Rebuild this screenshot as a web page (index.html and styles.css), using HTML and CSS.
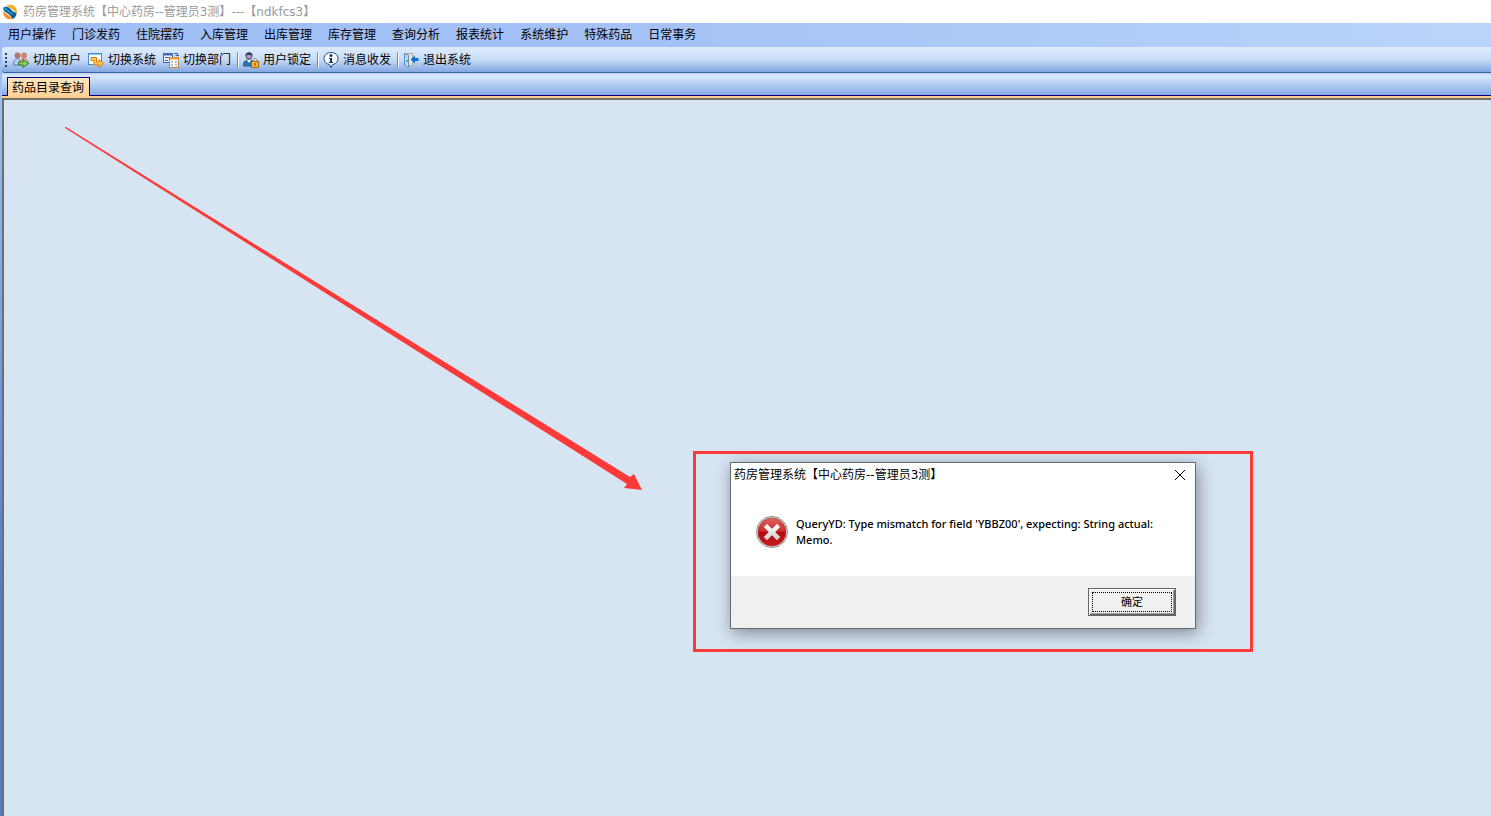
FILE: index.html
```html
<!DOCTYPE html>
<html lang="zh-CN">
<head>
    <meta charset="UTF-8">
    <meta name="viewport" content="width=device-width, initial-scale=1.0">
    <title>药房管理系统</title>
    <link rel="stylesheet" href="styles.css">
</head>
<body>
    <header class="titlebar">
        <svg class="icon" viewBox="0 0 16 16">
            <path d="M4 2C9 -1 15 2 15 8L14 10C13 6 9 4 4 2Z" fill="#f8ab20"/>
            <path d="M2 3C5 2 8 4 10 6.500C12 9 15 8 14.500 10C14 13 12 14.500 10.500 15C9 12 7 10 5 9C2 7.500 0.500 6 2 3Z" fill="#125b91"/>
            <path d="M2 3C5 4 6 6 9 8L13 11C10 11 8 10 6 8C4 6 2 6 1 5Z" fill="#2590c9"/>
            <path d="M1 7C3 10 7 10 10 15C5 16 1 13 1 7Z" fill="#f29424"/>
        </svg>
        <span>药房管理系统【中心药房--管理员3测】---【ndkfcs3】</span>
    </header>

    <nav class="menubar">
        <button class="menu-item">用户操作</button>
        <button class="menu-item">门诊发药</button>
        <button class="menu-item">住院摆药</button>
        <button class="menu-item">入库管理</button>
        <button class="menu-item">出库管理</button>
        <button class="menu-item">库存管理</button>
        <button class="menu-item">查询分析</button>
        <button class="menu-item">报表统计</button>
        <button class="menu-item">系统维护</button>
        <button class="menu-item">特殊药品</button>
        <button class="menu-item">日常事务</button>
    </nav>

    <div class="toolbar">
        <span class="grip"></span>
        <div class="tool-group">
            <button class="tool">
                <svg class="icon" viewBox="0 0 16 16">
                    <path d="M0.500 13C0.500 8 3 6.500 4.500 6.500S8 9 8 13Z" fill="#b9d4f3" stroke="#4b78bd"/>
                    <circle cx="4.500" cy="3.500" r="3" fill="#b87564"/>
                    <path d="M7 12C7 8 9 6.500 11 6.500S15 8 15 12Z" fill="#f0c4b8" stroke="#d0604a"/>
                    <circle cx="11" cy="3.500" r="3" fill="#d28472"/>
                    <path d="M5.500 10H10V7.500L15.500 11.500L10 15.500V13H5.500Z" fill="#8ed45c" stroke="#267724"/>
                </svg>
                <span>切换用户</span>
            </button>
            <button class="tool">
                <svg class="icon" viewBox="0 0 16 16">
                    <rect x="0.500" y="1.500" width="13" height="11" fill="#fff" stroke="#3c91d8"/>
                    <path d="M1 2.500H13" stroke="#83c7f2"/>
                    <path d="M3 5.500H8.500V10H11V7.500L15.500 11.500L11 15.500V13H6V8.500H3Z" fill="#ffc94a" stroke="#d07818"/>
                </svg>
                <span>切换系统</span>
            </button>
            <button class="tool">
                <svg class="icon" viewBox="0 0 16 16">
                    <rect x="0.500" y="1.500" width="9" height="9" fill="#e8f0ff" stroke="#4468b5"/>
                    <path d="M1 2.500H9" stroke="#4468b5" stroke-width="2"/>
                    <path d="M2 5.500H6M2 8.500H5" stroke="#4468b5"/>
                    <path d="M11 1.500H14.500V4M12.500 3.500H16" fill="none" stroke="#2f62ba"/>
                    <rect x="6.500" y="5.500" width="9" height="10" fill="#fff" stroke="#c88432"/>
                    <path d="M7 6.500H15" stroke="#f0a43c" stroke-width="2"/>
                    <path d="M8 10H10M12 10H14M8 13H10M12 13H14" stroke="#a9bfdc" stroke-width="2"/>
                </svg>
                <span>切换部门</span>
            </button>
        </div>
        <div class="tool-group">
            <button class="tool">
                <svg class="icon" viewBox="0 0 16 16">
                    <path d="M0.500 14C0 10 2 8 6 8S11 10 11 14Z" fill="#287ba5" stroke="#1b5a89"/>
                    <path d="M4 8L6 11L8 8Z" fill="#fff"/>
                    <circle cx="6" cy="4" r="3" fill="#b79bb0" stroke="#51457e"/>
                    <path d="M2.500 4C2 -1 10 -1 9.500 4L8 3H4Z" fill="#39366f"/>
                    <path d="M10 10V8C10 6 14 6 14 8V10" fill="none" stroke="#a6865b"/>
                    <rect x="8.500" y="9.500" width="7" height="6" fill="#f9b83d" stroke="#a96617"/>
                    <path d="M12 11V14" stroke="#704215"/>
                </svg>
                <span>用户锁定</span>
            </button>
        </div>
        <div class="tool-group">
            <button class="tool">
                <svg class="icon" viewBox="0 0 16 16">
                    <path d="M8 0.500C12 0.500 15 3 15 6.500C15 9.500 13 12 9.500 12.500L8 15.500L6.500 12.500C3 12 1 9.500 1 6.500C1 3 4 0.500 8 0.500Z" fill="#fff" stroke="#244885"/>
                    <circle cx="8" cy="3.500" r="1.500" fill="#12366f"/>
                    <path d="M6 6H9V10H10V11H6V10H7V7H6Z" fill="#12366f"/>
                </svg>
                <span>消息收发</span>
            </button>
        </div>
        <div class="tool-group">
            <button class="tool">
                <svg class="icon" viewBox="0 0 16 16">
                    <path d="M1.500 1.500H9.500V13.500H1.500Z" fill="#f4e6cb" stroke="#a9a49c"/>
                    <path d="M1.500 1.500L5.500 3V15.500L1.500 13Z" fill="#b9daf5" stroke="#5f8fc0"/>
                    <path d="M4 8V10" stroke="#275790"/>
                    <path d="M15.500 6V9H12V11.500L7.500 7.500L12 3.500V6Z" fill="#1670cc"/>
                </svg>
                <span>退出系统</span>
            </button>
        </div>
    </div>

    <div class="tabs">
        <button class="tab">药品目录查询</button>
    </div>

    <main class="workspace">
        <svg class="arrow" viewBox="0 0 578 364">
            <path d="M0 0L1 0L565 350L569 347L577 363L559 361L562 357L0 1Z" fill="#fc3a39"/>
        </svg>

        <div class="highlight"></div>

        <section class="dialog" role="alertdialog" aria-labelledby="dialogTitle">
            <div class="dialog-title">
                <span id="dialogTitle">药房管理系统【中心药房--管理员3测】</span>
                <button class="close" aria-label="关闭">
                    <svg viewBox="0 0 10 10"><path d="M0 0L10 10M10 0L0 10" stroke="#000"/></svg>
                </button>
            </div>
            <div class="dialog-body">
                <svg class="error-icon" viewBox="0 0 32 32">
                    <defs>
                        <linearGradient id="red" x1="0" y1="0" x2="0" y2="1">
                            <stop offset="0" stop-color="#e0635d"/>
                            <stop offset="0.480" stop-color="#c92b2b"/>
                            <stop offset="0.520" stop-color="#b00b10"/>
                            <stop offset="1" stop-color="#c81c1c"/>
                        </linearGradient>
                        <linearGradient id="cross" x1="0" y1="0" x2="0" y2="1">
                            <stop offset="0" stop-color="#fff"/>
                            <stop offset="1" stop-color="#cfcfcf"/>
                        </linearGradient>
                    </defs>
                    <circle cx="16" cy="16" r="15.500" fill="#e6e6e6" stroke="#8b8b8b"/>
                    <circle cx="16" cy="16" r="14" fill="url(#red)" stroke="#a02020" stroke-width="0.500"/>
                    <path d="M11 8L16 13L21 8L24 11L19 16L24 21L21 24L16 19L11 24L8 21L13 16L8 11Z" fill="url(#cross)" stroke="#ddd" stroke-width="0.500"/>
                </svg>
                <p>QueryYD: Type mismatch for field 'YBBZ00', expecting: String actual: Memo.</p>
            </div>
            <div class="dialog-footer">
                <button class="ok"><span>确定</span></button>
            </div>
        </section>
    </main>
</body>
</html>
```
FILE: styles.css
```css
* {
    box-sizing: border-box;
}
body {
    margin: 0;
    min-height: 100vh;
    display: flex;
    flex-direction: column;
    font-family: "Noto Sans", "Noto Sans CJK SC", sans-serif;
    font-size: 12px;
    line-height: 16px;
    color: #000;
    background: linear-gradient(#9ebef5 100px, #4a7bd4 600px);
    overflow: hidden;
}
button {
    font: inherit;
    color: inherit;
    padding: 0;
    border: 0;
    background: none;
    white-space: nowrap;
}
.icon {
    width: 16px;
    height: 16px;
    flex: none;
}
.titlebar,
.dialog-title {
    font-family: "DejaVu Sans", "Noto Sans CJK SC", sans-serif;
}
.titlebar {
    display: flex;
    align-items: center;
    gap: 5px;
    height: 23px;
    padding: 0 2px;
    background: #fff;
    color: #999;
}
.menubar {
    display: flex;
    gap: 16px;
    height: 24px;
    padding: 0 8px;
    background: linear-gradient(90deg, #9ebef5, #a3c1f6 40%, #bad4f9);
}
.toolbar {
    display: flex;
    align-items: center;
    height: 26px;
    margin-left: 2px;
    padding-left: 3px;
    background: linear-gradient(#ddecfe, #c8dcf7 50%, #82a7e1);
    border-bottom: 1px solid #3b619c;
    border-radius: 3px 0 0 3px;
}
.grip {
    width: 2px;
    height: 14px;
    margin-right: 6px;
    background: repeating-linear-gradient(#27417b 0 2px, transparent 2px 4px);
}
.tool-group {
    display: flex;
    gap: 7px;
}
.tool-group + .tool-group {
    margin-left: 6px;
    padding-left: 5px;
    border-left: 1px solid #6a8ccb;
    box-shadow: inset 1px 0 #f1f9ff;
}
.tool {
    display: flex;
    align-items: center;
    gap: 4px;
}
.tabs {
    display: flex;
    align-items: flex-end;
    height: 25px;
    margin-left: 2px;
    padding-left: 4px;
    border-top: 2px solid #c4daf8;
    border-bottom: 2px solid #ffcf8f;
    background: linear-gradient(#ddecfe, #82a7e1);
    box-shadow: inset 0 -1px #000080;
}
.tab {
    height: 19px;
    padding: 1px 5px 0 4px;
    margin-left: 1px;
    border: 1px solid #000080;
    border-bottom: 0;
    background: linear-gradient(#ffe5bd, #ffd297);
}
.workspace {
    position: relative;
    flex: 1;
    margin-left: 2px;
    border: solid #716f64;
    border-width: 2px 0 0 2px;
    background: #d7e4f2;
}
.arrow {
    position: absolute;
    left: 61px;
    top: 27px;
    width: 578px;
    height: 364px;
}
.highlight {
    position: absolute;
    left: 689px;
    top: 351px;
    width: 560px;
    height: 201px;
    border: 3px solid #fc3a39;
}
.dialog {
    position: absolute;
    left: 726px;
    top: 362px;
    width: 466px;
    border: 1px solid #636a73;
    background: #fff;
    box-shadow: 2px 4px 16px rgba(0, 0, 0, 0.4);
}
.dialog-title {
    display: flex;
    justify-content: space-between;
    align-items: center;
    height: 24px;
    padding: 0 10px 0 3px;
}
.close,
.close svg {
    display: block;
    width: 10px;
    height: 10px;
}
.dialog-body {
    display: flex;
    gap: 8px;
    height: 89px;
    padding: 29px 25px;
}
.dialog-body p {
    margin: 0;
    font-size: 11px;
    font-weight: 500;
}
.error-icon {
    width: 32px;
    height: 32px;
    flex: none;
}
.dialog-footer {
    display: flex;
    justify-content: flex-end;
    padding: 12px 19px;
    background: #f0f0f0;
}
.ok {
    width: 88px;
    height: 28px;
    padding: 2px 3px;
    font-size: 11px;
    line-height: 18px;
    border: 1px solid #646464;
    box-shadow: inset 1px 1px #fff, inset -1px -1px #646464, inset -2px -2px #a0a0a0;
}
.ok span {
    display: block;
    border: 1px dotted #000;
}
```
